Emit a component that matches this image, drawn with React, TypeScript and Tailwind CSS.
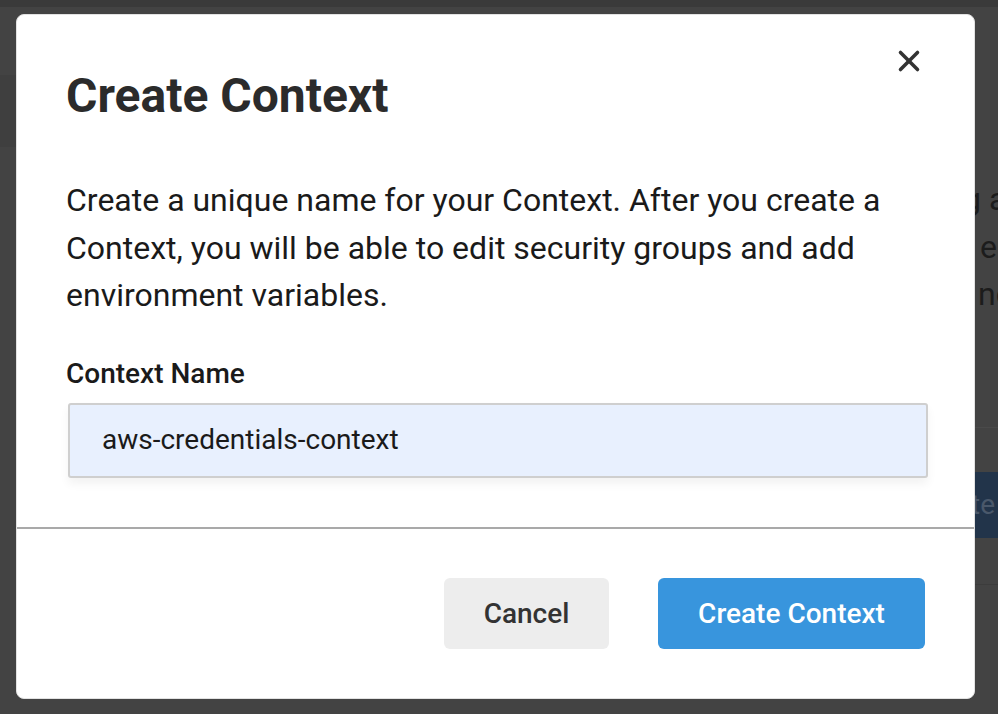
import { X } from 'lucide-react'

function BackgroundPage() {
  return (
    <div className="flex h-full flex-col">
      <div className="h-[7px] bg-[#3a3a3a]" />
      <div className="flex flex-1">
        <div className="w-[16px]">
          <div className="mt-[68px] h-[72px] bg-[#3f3f3f]" />
        </div>
        <div className="ml-[947px] flex flex-1 flex-col overflow-hidden whitespace-nowrap">
          <div className="pt-[169px] text-[32px] leading-[47.5px] text-[#1c1c1c]">
            <p>g a</p>
            <p className="pl-[17px]">e</p>
            <p className="pl-[15px]">nc</p>
          </div>
          <div className="mt-[108px] h-px bg-[#4a4a4a]" />
          <div className="mt-[44px] flex h-[66px] items-center bg-[#22344a] pl-[8px] text-[28px] text-[#4a586a]">
            te
          </div>
          <div className="mt-[46px] h-px bg-[#3c3c3c]" />
        </div>
      </div>
    </div>
  )
}

function CreateContextModal() {
  return (
    <div className="absolute left-[16px] top-[14px] flex h-[685px] w-[959px] flex-col rounded-[8px] border border-[#e2e2e2] bg-white">
      <button
        type="button"
        className="absolute right-[48px] top-[29px] text-[#333]"
        aria-label="Close"
      >
        <X className="h-[34px] w-[34px]" strokeWidth={2.5} />
      </button>
      <div className="px-[49px] pt-[53px]">
        <h2 className="text-[48px] font-bold leading-[56px] text-[#2b2b2b]">
          Create Context
        </h2>
        <p className="mt-[53px] text-[32px] leading-[47.5px] text-[#1a1a1a]">
          Create a unique name for your Context. After you create a Context, you will be
          able to edit security groups and add environment variables.
        </p>
        <label className="mt-[37px] block text-[28px] font-medium leading-[34px] text-[#1a1a1a]">
          Context Name
        </label>
        <div className="ml-[2px] mt-[12px] flex h-[75px] w-[860px] items-center rounded-[3px] border-2 border-[#cfcfcf] bg-[#e8f0fe] pb-px pl-[32px] text-[28px] text-[#1a1a1a] shadow-[0_6px_10px_rgba(0,0,0,0.05)]">
          aws-credentials-context
        </div>
      </div>
      <div className="mt-[49px] h-[2px] bg-[#a9a9a9]" />
      <div className="flex flex-1 items-end justify-end gap-[49px] px-[49px] pb-[49px]">
        <button
          type="button"
          className="h-[71px] w-[165px] rounded-[6px] bg-[#ededed] text-[28px] font-medium text-[#333]"
        >
          Cancel
        </button>
        <button
          type="button"
          className="h-[71px] w-[267px] rounded-[6px] bg-[#3895dd] text-[28px] font-medium text-white"
        >
          Create Context
        </button>
      </div>
    </div>
  )
}

export default function App() {
  return (
    <div className="relative h-[714px] w-[998px] overflow-hidden bg-[#434343] font-['Roboto',sans-serif]">
      <BackgroundPage />
      <CreateContextModal />
    </div>
  )
}
